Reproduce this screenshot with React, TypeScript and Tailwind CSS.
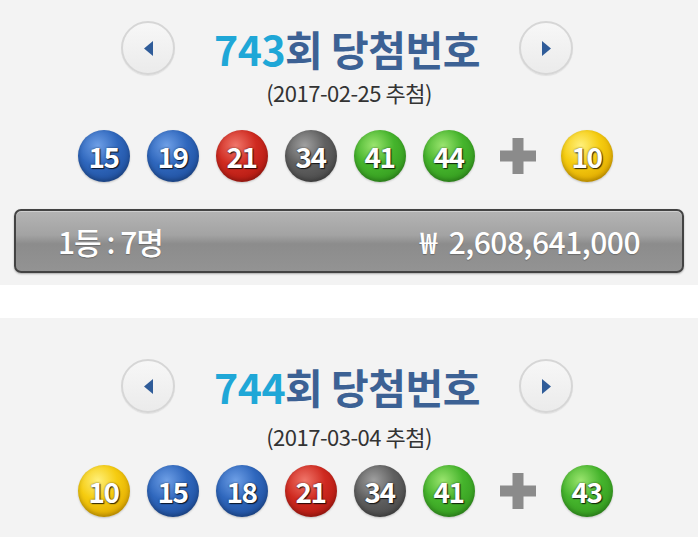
import { ReactNode } from "react";

type BallColor = "yellow" | "blue" | "red" | "gray" | "green";

interface Draw {
    round: number;
    date: string;
    numbers: number[];
    bonus: number;
    winners?: number;
    prize?: string;
}

const draws: Draw[] = [
    { round: 743, date: "2017-02-25", numbers: [15, 19, 21, 34, 41, 44], bonus: 10, winners: 7, prize: "2,608,641,000" },
    { round: 744, date: "2017-03-04", numbers: [10, 15, 18, 21, 34, 41], bonus: 43 },
];

const ballClass: Record<BallColor, string> = {
    yellow: "bg-[radial-gradient(circle_at_38%_30%,#fff07a_0%,#f5cc10_40%,#e0a800_80%,#c89000_100%)]",
    blue: "bg-[radial-gradient(circle_at_38%_30%,#6e9fe6_0%,#2f67bd_42%,#20509e_80%,#173d7c_100%)]",
    red: "bg-[radial-gradient(circle_at_38%_30%,#f0766a_0%,#cf2a20_42%,#b21a12_80%,#8e120c_100%)]",
    gray: "bg-[radial-gradient(circle_at_38%_30%,#a0a0a0_0%,#606060_42%,#4a4a4a_80%,#363636_100%)]",
    green: "bg-[radial-gradient(circle_at_38%_30%,#9ae46e_0%,#45b42c_42%,#349a1f_80%,#267a16_100%)]",
};

function colorOf(n: number): BallColor {
    if (n <= 10) return "yellow";
    if (n <= 20) return "blue";
    if (n <= 30) return "red";
    if (n <= 40) return "gray";
    return "green";
}

function Ball({ n }: { n: number }) {
    return (
        <div
            className={`w-[52px] h-[52px] rounded-full flex items-center justify-center shadow-[inset_0_-2px_4px_rgba(0,0,0,0.25),0_1px_2px_rgba(0,0,0,0.2)] ${ballClass[colorOf(n)]}`}
        >
            <span className="text-white text-[28px] font-bold tracking-[-1.5px] leading-none [text-shadow:1px_1px_1px_rgba(0,0,0,0.75),0_0_2px_rgba(0,0,0,0.6)]">
                {n}
            </span>
        </div>
    );
}

function Plus() {
    return (
        <div className="w-[52px] h-[52px] flex items-center justify-center">
            <svg width="36" height="36" viewBox="0 0 36 36">
                <rect x="12.5" y="0" width="11" height="36" fill="#8b8b8b" />
                <rect x="0" y="12.5" width="36" height="11" fill="#8b8b8b" />
            </svg>
        </div>
    );
}

function ArrowButton({ dir }: { dir: "left" | "right" }) {
    return (
        <button className="w-[54px] h-[54px] rounded-full border-2 border-[#d6d6d6] bg-[linear-gradient(to_bottom,#f7f7f7,#ebebeb)] flex items-center justify-center shadow-[0_1px_1px_rgba(0,0,0,0.08)]">
            <svg width="11" height="17" viewBox="0 0 11 17">
                {dir === "left" ? (
                    <polygon points="10,1 10,16 1,8.5" fill="#2f5c99" />
                ) : (
                    <polygon points="1,1 1,16 10,8.5" fill="#2f5c99" />
                )}
            </svg>
        </button>
    );
}

interface PanelProps {
    draw: Draw;
    spacing: { top: string; date: string; balls: string };
    children?: ReactNode;
}

function Panel({ draw, spacing, children }: PanelProps) {
    return (
        <section className={`bg-[#f3f3f3] flex flex-col ${spacing.top}`}>
            <div className="flex items-center justify-center gap-[39px] pr-[4px]">
                <ArrowButton dir="left" />
                <h2 className="text-[41px] font-bold leading-none tracking-[-0.5px] text-[#3c6194]">
                    <span className="text-[#1fa7d7]">{draw.round}</span>회 당첨번호
                </h2>
                <ArrowButton dir="right" />
            </div>
            <p className={`text-center text-[22px] leading-[24px] text-[#333] tracking-[-0.5px] ${spacing.date}`}>
                ({draw.date} 추첨)
            </p>
            <div className={`flex items-center justify-center gap-[17px] pr-[8px] ${spacing.balls}`}>
                {draw.numbers.map((n) => (
                    <Ball key={n} n={n} />
                ))}
                <Plus />
                <Ball n={draw.bonus} />
            </div>
            {children}
        </section>
    );
}

export default function App() {
    const first = draws[0];
    return (
        <div className="w-[698px] h-[539px] overflow-hidden bg-white font-['Noto_Sans_CJK_KR','Noto_Sans',sans-serif]">
            <Panel draw={first} spacing={{ top: "pt-[21px] pb-[12px]", date: "mt-[5px]", balls: "mt-[26px]" }}>
                <div className="mt-[27px] mx-[14px] h-[64px] rounded-[7px] border-2 border-[#434343] bg-[linear-gradient(to_bottom,#b4b4b4_0%,#a3a3a3_40%,#8c8c8c_55%,#939393_100%)] shadow-[inset_0_1px_0_rgba(255,255,255,0.35),0_1px_2px_rgba(0,0,0,0.3)] flex items-center justify-between pl-[42px] pr-[42px]">
                    <span className="text-white text-[30px] font-medium leading-none tracking-[-1px] [text-shadow:0_1px_1px_rgba(0,0,0,0.25)]">
                        1등 : {first.winners}명
                    </span>
                    <span className="text-white text-[30px] font-medium leading-none tracking-[-0.5px] [text-shadow:0_1px_1px_rgba(0,0,0,0.25)]">
                        ₩<span className="ml-[12px]">{first.prize}</span>
                    </span>
                </div>
            </Panel>
            <div className="h-[33px] bg-white" />
            <Panel draw={draws[1]} spacing={{ top: "pt-[41px] pb-[20px]", date: "mt-[11px]", balls: "mt-[17px]" }} />
        </div>
    );
}
